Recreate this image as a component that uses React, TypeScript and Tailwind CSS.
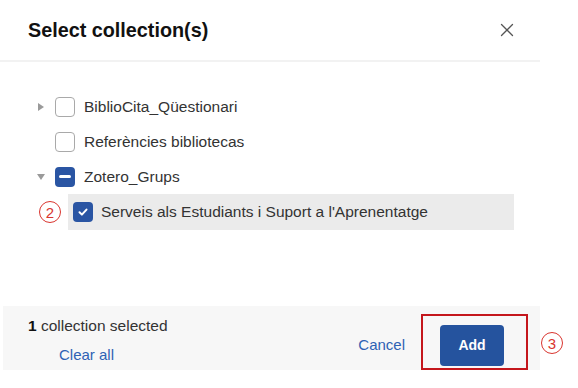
import { X } from 'lucide-react'

type Node = {
  label: string
  state: 'none' | 'partial' | 'checked'
  toggle?: 'closed' | 'open'
}

const topLevel: Node[] = [
  { label: 'BiblioCita_Qüestionari', state: 'none', toggle: 'closed' },
  { label: 'Referències bibliotecas', state: 'none' },
  { label: 'Zotero_Grups', state: 'partial', toggle: 'open' },
]

function Box({ state }: { state: Node['state'] }) {
  if (state === 'none') {
    return <span className="w-[20px] h-[20px] rounded-[4px] border border-[#a9a9a9] bg-white shrink-0" />
  }
  return (
    <span className="w-[20px] h-[20px] rounded-[4px] bg-[#2a55a3] flex items-center justify-center shrink-0">
      {state === 'partial' ? (
        <span className="w-[12px] h-[2.5px] bg-white rounded-sm" />
      ) : (
        <svg width="12" height="12" viewBox="0 0 12 12" fill="none" stroke="white" strokeWidth="2" strokeLinecap="round" strokeLinejoin="round">
          <path d="M2.5 6.3l2.4 2.3 4.6-5" />
        </svg>
      )}
    </span>
  )
}

function Caret({ toggle }: { toggle?: Node['toggle'] }) {
  return (
    <span className="w-[15px] flex items-center justify-center shrink-0">
      {toggle === 'closed' && (
        <svg width="6" height="8" viewBox="0 0 6 8"><path d="M0 0l6 4-6 4z" fill="#9a9a9a" /></svg>
      )}
      {toggle === 'open' && (
        <svg width="8" height="6" viewBox="0 0 8 6"><path d="M0 0h8L4 6z" fill="#9a9a9a" /></svg>
      )}
    </span>
  )
}

function Badge({ n }: { n: number }) {
  return (
    <span className="w-[22px] h-[22px] rounded-full border border-[#d9352f] text-[#d9352f] text-[15px] leading-none flex items-center justify-center">
      {n}
    </span>
  )
}

export default function App() {
  return (
    <div className="w-[578px] h-[388px] bg-white relative overflow-hidden font-['Liberation_Sans',Arial,sans-serif] text-[#2b2b2b]">
      <div className="w-[540px] flex flex-col">
        <div className="h-[62px] flex items-center justify-between pl-[28px] pr-[22px] border-b-2 border-[#f2f2f2]">
          <h1 className="text-[19.8px] font-bold text-[#111] pt-[1px]">Select collection(s)</h1>
          <X size={22} strokeWidth={1.4} className="text-[#555]" />
        </div>

        <div className="h-[244px] pt-[27px] pl-[33px]">
          {topLevel.map(node => (
            <div key={node.label} className="h-[35px] flex items-center">
              <Caret toggle={node.toggle} />
              <span className="w-[7px]" />
              <Box state={node.state} />
              <span className="ml-[9px] text-[15.5px] text-[#333]">{node.label}</span>
            </div>
          ))}
          <div className="relative ml-[35px] w-[446px] h-[36px] bg-[#ebebeb] flex items-center pl-[5px]">
            <Box state="checked" />
            <span className="ml-[8px] text-[15.5px] text-[#333]">Serveis als Estudiants i Suport a l'Aprenentatge</span>
            <span className="absolute left-[-29px] top-[7px]"><Badge n={2} /></span>
          </div>
        </div>

        <div className="h-[64px] bg-[#f7f7f7] ml-[3px] flex items-center justify-between pl-[25px] pr-[36px]">
          <div className="flex flex-col mt-[5px]">
            <span className="text-[15.5px] text-[#333] leading-[18px]"><b className="text-[#111]">1</b> collection selected</span>
            <span className="ml-[31px] mt-[11px] text-[15px] text-[#2e62b4] leading-[18px]">Clear all</span>
          </div>
          <div className="flex items-center">
            <span className="text-[15px] text-[#2e62b4] mt-[15px]">Cancel</span>
            <button className="ml-[35px] mt-[15px] w-[64px] h-[41px] rounded-[4px] bg-[#25539e] text-white text-[14px] font-bold">Add</button>
          </div>
        </div>
      </div>

      <div className="absolute left-[421px] top-[314px] w-[107px] h-[56px] border-2 border-[#c4161c]" />
      <span className="absolute left-[541px] top-[332px]"><Badge n={3} /></span>
    </div>
  )
}
